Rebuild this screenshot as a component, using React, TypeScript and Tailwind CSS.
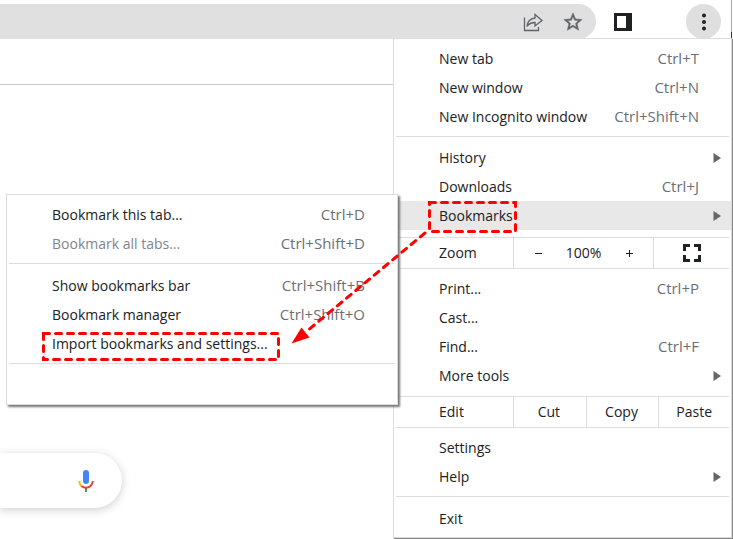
import type { ReactNode } from "react";

function MenuItem({
  label,
  shortcut,
  submenu = false,
  active = false,
  disabled = false,
}: {
  label: string;
  shortcut?: string;
  submenu?: boolean;
  active?: boolean;
  disabled?: boolean;
}) {
  return (
    <button
      type="button"
      disabled={disabled}
      className={`flex h-[29px] w-full items-center pl-[45px] text-left ${submenu ? "pr-[10px]" : "pr-8"} ${
        active ? "bg-[#e8e8e8]" : ""
      } ${disabled ? "text-[#80868b]" : "text-[#202124]"}`}
    >
      <span className="flex-1">{label}</span>
      {shortcut && <span className="text-[15px] text-[#6b6f74]">{shortcut}</span>}
      {submenu && (
        <svg width="8" height="10" viewBox="0 0 8 10" aria-hidden="true">
          <path d="M0.5 0 8 5 0.5 10z" fill="#666" />
        </svg>
      )}
    </button>
  );
}

function Separator() {
  return <hr className="mx-[2px] border-[#dadce0]" />;
}

function Cell({ children, label }: { children: ReactNode; label?: string }) {
  return (
    <button
      type="button"
      aria-label={label}
      className="flex flex-1 items-center justify-center border-l border-[#dadce0] pr-[2px]"
    >
      {children}
    </button>
  );
}

function BookmarksMenu() {
  return (
    <div className="absolute top-[155px] right-[333px] w-[392px] border border-[#dadce0] bg-white shadow-[2px_2px_2px_#777]">
      <div className="py-[5px]">
        <MenuItem label="Bookmark this tab..." shortcut="Ctrl+D" />
        <MenuItem label="Bookmark all tabs..." shortcut="Ctrl+Shift+D" disabled />
      </div>
      <Separator />
      <div className="pt-[7px] pb-[5px]">
        <MenuItem label="Show bookmarks bar" shortcut="Ctrl+Shift+B" />
        <MenuItem label="Bookmark manager" shortcut="Ctrl+Shift+O" />
        <MenuItem label="Import bookmarks and settings..." />
      </div>
      <Separator />
      <div className="h-10" />
    </div>
  );
}

// Red dashed boxes and the arrow between them
function Highlights() {
  return (
    <svg
      className="pointer-events-none absolute -top-[39px] -right-[2px]"
      width="733"
      height="539"
      viewBox="0 0 733 539"
      fill="none"
      aria-hidden="true"
    >
      <g stroke="#fe0000" strokeWidth="3" strokeLinecap="round" strokeDasharray="6 6">
        <rect x="429.5" y="202.5" width="86" height="29" />
        <rect x="43.5" y="333.5" width="235" height="26" />
        <path d="M425 233 307 331" />
      </g>
      <path d="M291.500 343.500 301.500 327.500 309.500 337.500z" fill="#fe0000" />
    </svg>
  );
}

function AppMenu() {
  return (
    <div className="absolute top-[38px] right-px w-[339px] border border-[#dadce0] bg-white shadow-[1px_1px_1px_#888]">
      <div className="py-[5px]">
        <MenuItem label="New tab" shortcut="Ctrl+T" />
        <MenuItem label="New window" shortcut="Ctrl+N" />
        <MenuItem label="New Incognito window" shortcut="Ctrl+Shift+N" />
      </div>
      <Separator />
      <div className="pt-[6px] pb-[7px]">
        <MenuItem label="History" submenu />
        <MenuItem label="Downloads" shortcut="Ctrl+J" />
        <MenuItem label="Bookmarks" submenu active />
      </div>
      <Separator />

      {/* Zoom */}
      <div className="flex h-[30px]">
        <span className="flex w-[119px] items-center pl-[45px]">Zoom</span>
        <div className="flex w-[140px] items-center border-l border-[#dadce0]">
          <button type="button" aria-label="Zoom out" className="flex w-12 justify-center">
            <svg width="9" height="9" viewBox="0 0 9 9">
              <path d="M1 4.500H8" stroke="#202124" />
            </svg>
          </button>
          <span className="flex-1 text-center">100%</span>
          <button type="button" aria-label="Zoom in" className="flex w-12 justify-center">
            <svg width="9" height="9" viewBox="0 0 9 9">
              <path d="M1 4.500H8M4.500 1V8" stroke="#202124" />
            </svg>
          </button>
        </div>
        <Cell label="Full screen">
          <svg width="18" height="18" viewBox="0 0 18 18" fill="none" stroke="#202124" strokeWidth="3">
            <path d="M1.500 7V1.500H7M11 1.500H16.500V7M16.500 11V16.500H11M7 16.500H1.500V11" />
          </svg>
        </Cell>
      </div>
      <Separator />

      <div className="pt-[5px] pb-[6px]">
        <MenuItem label="Print..." shortcut="Ctrl+P" />
        <MenuItem label="Cast..." />
        <MenuItem label="Find..." shortcut="Ctrl+F" />
        <MenuItem label="More tools" submenu />
      </div>
      <Separator />

      {/* Edit */}
      <div className="flex h-[30px]">
        <span className="flex w-[119px] items-center pl-[45px]">Edit</span>
        <Cell>Cut</Cell>
        <Cell>Copy</Cell>
        <Cell>Paste</Cell>
      </div>
      <Separator />

      <div className="py-[5px]">
        <MenuItem label="Settings" />
        <MenuItem label="Help" submenu />
      </div>
      <Separator />
      <div className="pt-[7px] pb-[4px]">
        <MenuItem label="Exit" />
      </div>

      <BookmarksMenu />
      <Highlights />
    </div>
  );
}

function Toolbar() {
  return (
    <header className="flex h-[85px] items-start border-b border-[#c8c8c8] pr-px">
      <div className="mt-1 flex h-[35px] flex-1 items-center justify-end gap-[18px] rounded-r-full bg-[#e0e0e0] pr-3">
        <button type="button" aria-label="Share this page">
          <svg width="22" height="22" viewBox="0 0 22 22" fill="none" stroke="#5f6368" strokeWidth="1.300">
            <path d="M2.500 6.500V19.500H16.500V16" />
            <path d="M13 3.500 20 9.500 13 15V11.500C9.500 11.500 7 12.500 5 15.500 5.500 10.500 8.500 7.500 13 7z" />
          </svg>
        </button>
        <button type="button" aria-label="Bookmark this tab">
          <svg width="22" height="22" viewBox="0 0 24 24" fill="#5f6368" stroke="#5f6368" strokeWidth="0.500">
            <path d="m22 9.240-7.190-.620L12 2 9.190 8.630 2 9.240l5.460 4.730L5.820 21 12 17.270 18.180 21l-1.630-7.030L22 9.240zM12 15.400l-3.760 2.270 1-4.280-3.320-2.880 4.380-.380L12 6.100l1.710 4.040 4.380.380-3.320 2.880 1 4.280L12 15.400z" />
          </svg>
        </button>
      </div>
      <button type="button" aria-label="Side panel" className="mt-1 ml-[18px] flex h-[35px] items-center">
        <svg width="18" height="18" viewBox="0 0 18 18">
          <path fill="#202124" fillRule="evenodd" d="M0 0H18V18H0zM3 3V15H12V3z" />
        </svg>
      </button>
      <button
        type="button"
        aria-label="Menu"
        className="mt-1 ml-[54px] flex h-[35px] w-[35px] items-center justify-center rounded-full bg-[#dfdfdf]"
      >
        <svg width="4" height="18" viewBox="0 0 4 18" fill="#202124">
          <circle cx="2" cy="2.500" r="2" />
          <circle cx="2" cy="9" r="2" />
          <circle cx="2" cy="15.500" r="2" />
        </svg>
      </button>
      {/* Window edge */}
      <div className="ml-[10px] h-10 w-px border-b-8 border-[#333] bg-[#a8a8a8]" />
    </header>
  );
}

export default function App() {
  return (
    <div className="relative min-h-screen overflow-hidden bg-white font-['Open_Sans','Noto_Sans',sans-serif] text-sm text-[#202124]">
      <Toolbar />
      <main className="pt-[368px]">
        <div className="flex h-[55px] w-[122px] items-center justify-end rounded-r-full bg-white pr-7 shadow-[0_2px_8px_rgba(60,64,67,0.25)]">
          <button type="button" aria-label="Search by voice">
            <svg width="16" height="22" viewBox="0 0 16 22" fill="none" strokeWidth="2">
              <rect x="5" y="0" width="6" height="14" rx="3" fill="#4285f4" />
              <path d="M8 18V22" stroke="#34a853" />
              <path d="M1.200 11C1.200 13 2 14.700 3.400 15.900" stroke="#fbbc04" />
              <path d="M3.400 15.900C6 18.200 10 18.200 12.600 15.900 14 14.700 14.800 13 14.800 11" stroke="#ea4335" />
            </svg>
          </button>
        </div>
      </main>
      <AppMenu />
    </div>
  );
}
